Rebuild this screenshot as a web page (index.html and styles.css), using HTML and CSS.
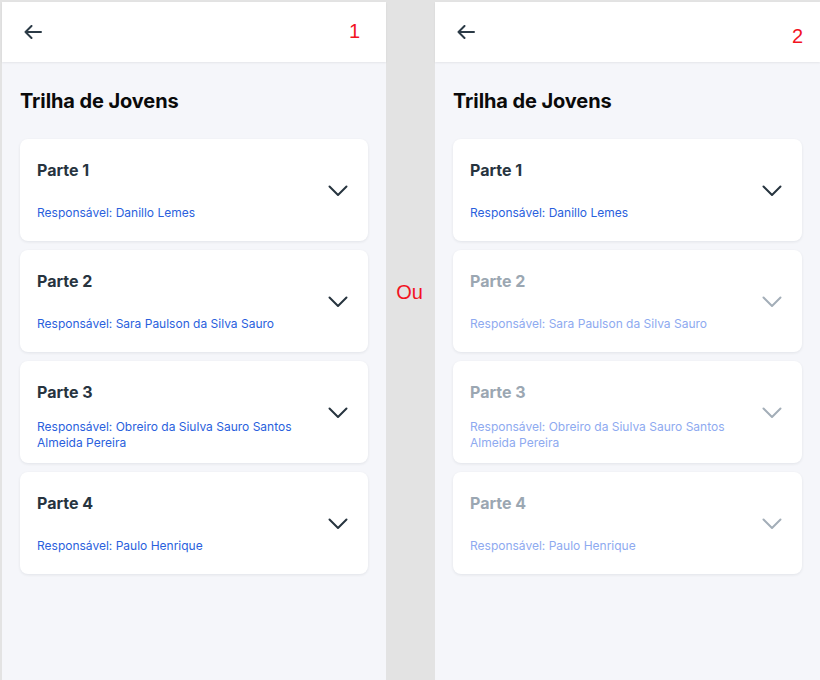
FILE: index.html
```html
<!DOCTYPE html>
<html lang="pt">
<head>
<meta charset="utf-8">
<title>Trilha de Jovens</title>
<link rel="stylesheet" href="styles.css">
</head>
<body>
<div class="board">
  <section class="phone phone-left">
    <header class="topbar">
      <svg class="back" width="18" height="14" viewBox="0 0 18 14" fill="none" stroke="currentColor" stroke-width="2" stroke-linecap="round" stroke-linejoin="round"><path d="M17 7H1.5M7.5 1L1.5 7l6 6"/></svg>
      <span class="mark mark-one">1</span>
    </header>
    <main class="content">
      <h1 class="title">Trilha de Jovens</h1>
      <div class="list">
        <div class="card">
          <div class="card-text">
            <div class="card-title">Parte 1</div>
            <div class="card-sub">Responsável: Danillo Lemes</div>
          </div>
          <svg class="chev" width="20" height="12" viewBox="0 0 20 12" fill="none" stroke="currentColor" stroke-width="2" stroke-linecap="round" stroke-linejoin="round"><path d="M1.5 1.5l8.5 8.5 8.5-8.5"/></svg>
        </div>
        <div class="card">
          <div class="card-text">
            <div class="card-title">Parte 2</div>
            <div class="card-sub">Responsável: Sara Paulson da Silva Sauro</div>
          </div>
          <svg class="chev" width="20" height="12" viewBox="0 0 20 12" fill="none" stroke="currentColor" stroke-width="2" stroke-linecap="round" stroke-linejoin="round"><path d="M1.5 1.5l8.5 8.5 8.5-8.5"/></svg>
        </div>
        <div class="card">
          <div class="card-text">
            <div class="card-title">Parte 3</div>
            <div class="card-sub multi">Responsável: Obreiro da Siulva Sauro Santos Almeida Pereira</div>
          </div>
          <svg class="chev" width="20" height="12" viewBox="0 0 20 12" fill="none" stroke="currentColor" stroke-width="2" stroke-linecap="round" stroke-linejoin="round"><path d="M1.5 1.5l8.5 8.5 8.5-8.5"/></svg>
        </div>
        <div class="card">
          <div class="card-text">
            <div class="card-title">Parte 4</div>
            <div class="card-sub">Responsável: Paulo Henrique</div>
          </div>
          <svg class="chev" width="20" height="12" viewBox="0 0 20 12" fill="none" stroke="currentColor" stroke-width="2" stroke-linecap="round" stroke-linejoin="round"><path d="M1.5 1.5l8.5 8.5 8.5-8.5"/></svg>
        </div>
      </div>
    </main>
  </section>

  <div class="divider"><span class="mark">Ou</span></div>

  <section class="phone phone-right">
    <header class="topbar">
      <svg class="back" width="18" height="14" viewBox="0 0 18 14" fill="none" stroke="currentColor" stroke-width="2" stroke-linecap="round" stroke-linejoin="round"><path d="M17 7H1.5M7.5 1L1.5 7l6 6"/></svg>
      <span class="mark mark-two">2</span>
    </header>
    <main class="content">
      <h1 class="title">Trilha de Jovens</h1>
      <div class="list">
        <div class="card">
          <div class="card-text">
            <div class="card-title">Parte 1</div>
            <div class="card-sub">Responsável: Danillo Lemes</div>
          </div>
          <svg class="chev" width="20" height="12" viewBox="0 0 20 12" fill="none" stroke="currentColor" stroke-width="2" stroke-linecap="round" stroke-linejoin="round"><path d="M1.5 1.5l8.5 8.5 8.5-8.5"/></svg>
        </div>
        <div class="card card-disabled">
          <div class="card-text">
            <div class="card-title">Parte 2</div>
            <div class="card-sub">Responsável: Sara Paulson da Silva Sauro</div>
          </div>
          <svg class="chev" width="20" height="12" viewBox="0 0 20 12" fill="none" stroke="currentColor" stroke-width="2" stroke-linecap="round" stroke-linejoin="round"><path d="M1.5 1.5l8.5 8.5 8.5-8.5"/></svg>
        </div>
        <div class="card card-disabled">
          <div class="card-text">
            <div class="card-title">Parte 3</div>
            <div class="card-sub multi">Responsável: Obreiro da Siulva Sauro Santos Almeida Pereira</div>
          </div>
          <svg class="chev" width="20" height="12" viewBox="0 0 20 12" fill="none" stroke="currentColor" stroke-width="2" stroke-linecap="round" stroke-linejoin="round"><path d="M1.5 1.5l8.5 8.5 8.5-8.5"/></svg>
        </div>
        <div class="card card-disabled">
          <div class="card-text">
            <div class="card-title">Parte 4</div>
            <div class="card-sub">Responsável: Paulo Henrique</div>
          </div>
          <svg class="chev" width="20" height="12" viewBox="0 0 20 12" fill="none" stroke="currentColor" stroke-width="2" stroke-linecap="round" stroke-linejoin="round"><path d="M1.5 1.5l8.5 8.5 8.5-8.5"/></svg>
        </div>
      </div>
    </main>
  </section>
</div>
</body>
</html>
```

FILE: styles.css
```css
* { box-sizing: border-box; }

html, body {
  margin: 0;
  padding: 0;
  background: #e3e3e3;
}

body {
  font-family: Inter, "Noto Sans", sans-serif;
  width: 820px;
  height: 680px;
  overflow: hidden;
}

.board {
  display: flex;
  padding: 2px 0 0 2px;
  height: 680px;
}

.phone {
  display: flex;
  flex-direction: column;
  background: #f5f6fa;
  height: 678px;
}

.phone-left { width: 384px; }
.phone-right { width: 385px; }

.topbar {
  height: 60px;
  background: #ffffff;
  display: flex;
  align-items: center;
  justify-content: space-between;
  padding: 0 26px 0 22px;
  box-shadow: 0 1px 2px rgba(0, 0, 0, 0.07);
  position: relative;
  z-index: 1;
}

.back {
  color: #2b3a46;
  margin-top: -1px;
  display: block;
}

.mark {
  font-family: "Liberation Sans", Arial, sans-serif;
  color: #f2131f;
  font-size: 20px;
  line-height: 1;
}

.mark-one { margin-top: -2px; margin-right: 0; }
.mark-two { margin-top: 8px; margin-right: -9px; }

.divider {
  width: 49px;
  flex: none;
  display: flex;
  justify-content: center;
  padding-top: 280px;
}

.divider .mark { font-size: 20px; margin-left: -2px; }

.content {
  padding: 0 18px;
}

.title {
  margin: 27px 0 0;
  font-size: 20px;
  line-height: 24px;
  font-weight: 700;
  color: #0a0a0a;
  letter-spacing: -0.1px;
}

.list {
  display: flex;
  flex-direction: column;
  gap: 9px;
  margin-top: 26px;
}

.card {
  height: 102px;
  background: #ffffff;
  border-radius: 8px;
  box-shadow: 0 1px 3px rgba(30, 40, 60, 0.09);
  display: flex;
  align-items: center;
  justify-content: space-between;
  padding: 0 20px 0 17px;
}

.card-text {
  align-self: flex-start;
  padding-top: 21px;
  width: 270px;
}

.card-title {
  font-size: 16px;
  line-height: 20px;
  font-weight: 700;
  color: #27343f;
}

.card-sub {
  margin-top: 25px;
  font-size: 12px;
  line-height: 16px;
  color: #2a5fdd;
}

.card-sub.multi { margin-top: 17px; }

.chev {
  color: #27343f;
  display: block;
  margin-top: 1px;
}

.card-disabled .card-title { color: #9ba7b2; }
.card-disabled .card-sub { color: #8eaaf0; }
.card-disabled .chev { color: #a3aeb8; }
```
